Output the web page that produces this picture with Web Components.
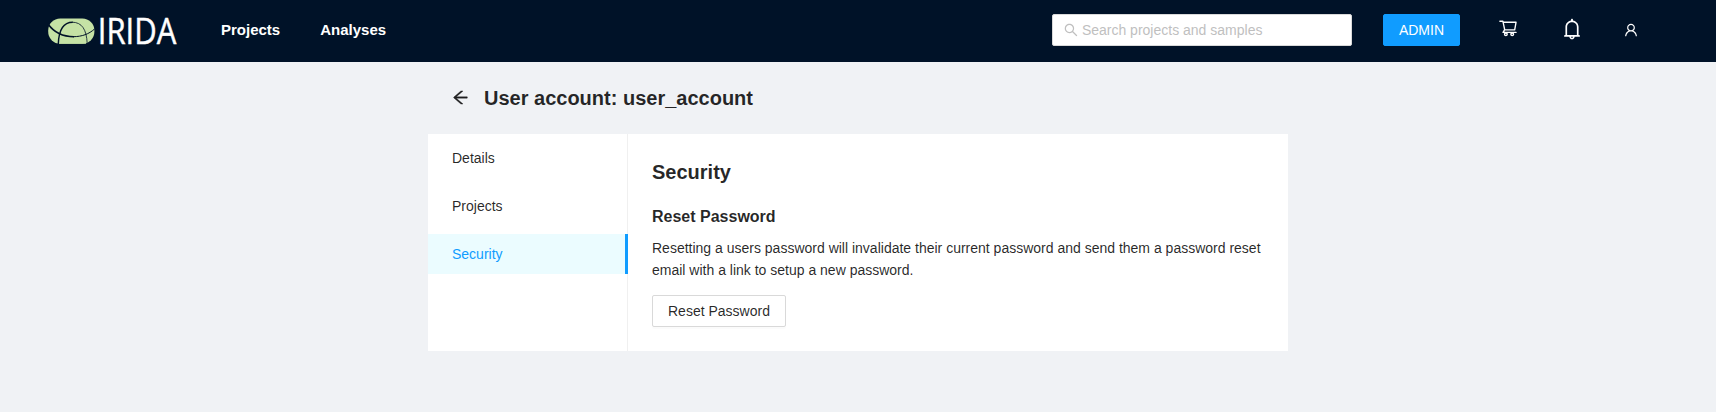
<!DOCTYPE html>
<html lang="en">
<head>
<meta charset="utf-8">
<title>IRIDA - User account</title>
<style>
body{margin:0;background:#f0f2f5;font:14px/22px "Liberation Sans",Arial,sans-serif;color:rgba(0,0,0,.85)}
</style>
</head>
<body>
<irida-app></irida-app>
<script>
const ICONS = {
  search:'M909.6 854.5L649.9 594.8C690.2 542.7 712 479 712 412c0-80.2-31.3-155.4-87.9-212.1-56.6-56.7-132-87.9-212.1-87.9s-155.5 31.3-212.1 87.9C143.2 256.5 112 331.8 112 412c0 80.1 31.3 155.5 87.9 212.1C256.5 680.8 331.8 712 412 712c67 0 130.6-21.8 182.7-62l259.7 259.6a8.2 8.2 0 0011.6 0l43.6-43.5a8.2 8.2 0 000-11.6zM570.4 570.4C528 612.7 471.8 636 412 636s-116-23.3-158.4-65.6C211.3 528 188 471.8 188 412s23.3-116.1 65.6-158.4C296 211.3 352.2 188 412 188s116.1 23.2 158.4 65.6S636 352.2 636 412s-23.3 116.1-65.6 158.4z',
  back:'M872 474H286.9l350.2-304c5.6-4.9 2.2-14-5.2-14h-88.5c-3.9 0-7.6 1.4-10.5 3.9L155 487.8a31.96 31.96 0 000 48.3L535.1 866c1.5 1.3 3.3 2 5.2 2h91.5c7.4 0 10.8-9.2 5.2-14L286.9 550H872c4.4 0 8-3.6 8-8v-60c0-4.4-3.6-8-8-8z',
  bell:'M816 768h-24V428c0-141.1-104.3-257.8-240-277.2V112c0-22.1-17.9-40-40-40s-40 17.9-40 40v38.8C336.3 170.2 232 286.9 232 428v340h-24c-17.7 0-32 14.3-32 32v32c0 4.4 3.6 8 8 8h216c0 61.8 50.2 112 112 112s112-50.2 112-112h216c4.4 0 8-3.6 8-8v-32c0-17.7-14.3-32-32-32zM512 888c-26.5 0-48-21.5-48-48h96c0 26.5-21.5 48-48 48zM304 768V428c0-55.6 21.6-107.8 60.9-147.1S456.4 220 512 220c55.6 0 107.8 21.6 147.1 60.9S720 372.4 720 428v340H304z',
  user:'M858.5 763.6a374 374 0 00-80.6-119.5 375.63 375.63 0 00-119.5-80.6c-.4-.2-.8-.3-1.2-.5C719.5 518 760 444.7 760 362c0-137-111-248-248-248S264 225 264 362c0 82.7 40.5 156 102.8 201.1-.4.2-.8.3-1.2.5-44.8 18.9-85 46-119.5 80.6a375.63 375.63 0 00-80.6 119.5A371.7 371.7 0 00136 901.8a8 8 0 008 8.2h60c4.4 0 7.9-3.5 8-7.8 2-77.2 33-149.5 87.8-204.3 56.7-56.7 132-87.9 212.2-87.9s155.5 31.2 212.2 87.9C779 752.7 810 825 812 902.2c.1 4.4 3.6 7.8 8 7.8h60a8 8 0 008-8.2c-1-47.8-10.9-94.3-29.5-138.2zM512 534c-45.9 0-89.1-17.9-121.6-50.4S340 407.9 340 362c0-45.9 17.9-89.1 50.4-121.6S466.1 190 512 190s89.1 17.9 121.6 50.4S684 316.1 684 362c0 45.9-17.9 89.1-50.4 121.6S557.9 534 512 534z',
  cart:'M922.9 701.9H327.4l29.9-60.9 496.8-.9c16.8 0 31.2-12 34.2-28.6l68.8-385.1c1.8-10.1-.9-20.5-7.5-28.4a34.99 34.99 0 00-26.6-12.5l-632-2.1-5.4-25.4c-3.4-16.2-18-28-34.6-28H96.5a35.3 35.3 0 100 70.6h125.9L246 312.8l58.1 281.3-74.8 122.1a34.96 34.96 0 00-3 36.8c6 11.9 18.1 19.4 31.5 19.4h62.8a102.43 102.43 0 00-20.6 61.7c0 56.6 46 102.6 102.6 102.6s102.6-46 102.6-102.6c0-22.3-7.4-44-20.6-61.7h161.1a102.43 102.43 0 00-20.6 61.7c0 56.6 46 102.6 102.6 102.6s102.6-46 102.6-102.6c0-22.3-7.4-44-20.6-61.7H923c19.4 0 35.3-15.8 35.3-35.3a35.42 35.42 0 00-35.4-35.2zM305.7 253l575.8 1.9-56.4 315.8-452.3.8L305.7 253zm96.9 612.7c-17.4 0-31.6-14.2-31.6-31.6 0-17.4 14.2-31.6 31.6-31.6s31.6 14.2 31.6 31.6a31.6 31.6 0 01-31.6 31.6zm325.1 0c-17.4 0-31.6-14.2-31.6-31.6 0-17.4 14.2-31.6 31.6-31.6s31.6 14.2 31.6 31.6a31.6 31.6 0 01-31.6 31.6z'
};

function define(name, html) {
  customElements.define(name, class extends HTMLElement {
    constructor() {
      super();
      const t = document.createElement('template');
      t.innerHTML = html;
      this.attachShadow({mode: 'open'}).append(t.content.cloneNode(true));
    }
  });
}

customElements.define('irida-icon', class extends HTMLElement {
  connectedCallback() {
    if (this.shadowRoot) return;
    const size = this.getAttribute('size') || 16;
    this.attachShadow({mode: 'open'}).innerHTML = `
      <style>:host{display:block;flex:none;line-height:0}svg{display:block;fill:currentColor}
      :host([bold]) path{stroke:currentColor;stroke-width:20}</style>
      <svg width="${size}" height="${size}" viewBox="0 0 1024 1024"><path d="${ICONS[this.getAttribute('name')]}"/></svg>`;
  }
});

define('irida-logo', `
  <style>:host{display:block;flex:none;width:134px;height:30px}svg{display:block;overflow:visible}
  text{font-family:"Open Sans","Noto Sans",sans-serif;font-size:35.6px;line-height:1;fill:#fff;stroke:#fff;stroke-width:.45px}</style>
  <svg width="134" height="30" viewBox="0 0 134 30">
    <rect x="0.2" y="3.6" width="46.2" height="25.1" rx="12" fill="#c5e2a5"/>
    <path d="M10.5 28.7V20H38V28.7Z" fill="#c5e2a5"/>
    <g fill="none" stroke="#001228">
      <path d="M0 9C5 16 14 21.7 26 21.7" stroke-width="1.6"/>
      <path d="M25 21.7C34 21.7 41 19 46.5 14" stroke-width="1"/>
      <path d="M10.3 29C10.8 14 15.5 7.2 24.7 7.2" stroke-width="1.4"/>
      <path d="M24 7.2C34 7.2 38.6 14.5 39.2 28.7" stroke-width=".8"/>
    </g>
    <text x="49.8" y="28.6" textLength="78.6" lengthAdjust="spacingAndGlyphs">IRIDA</text>
  </svg>`);

define('irida-search', `
  <style>:host{box-sizing:border-box;display:flex;align-items:center;gap:3px;width:300px;height:32px;
  padding:0 10px;border:1px solid #d9d9d9;border-radius:2px;background:#fff;color:#bfbfbf}</style>
  <irida-icon name="search" size="16"></irida-icon><span>Search projects and samples</span>`);

define('irida-button', `
  <style>
  :host{box-sizing:border-box;display:inline-flex;align-items:center;height:32px;padding:0 15px;
  border:1px solid #d9d9d9;border-radius:2px;background:#fff;box-shadow:0 2px 0 rgba(0,0,0,.016)}
  :host([primary]){background:#109cff;border-color:#109cff;color:#fff;box-shadow:none}
  </style><slot></slot>`);

define('irida-header', `
  <style>
  :host{box-sizing:border-box;display:flex;align-items:center;height:62px;padding:0 77px 2px 48px;background:#001228;color:#fff}
  nav{display:flex;gap:40px;margin-left:39px;font-size:15px;font-weight:700}
  .tools{display:flex;align-items:center;margin-left:auto}
  .admin{margin:0 38px 0 31px}
  .cart{margin-bottom:4px}
  .bell{margin:0 39px 2px 42px}
  </style>
  <irida-logo></irida-logo>
  <nav><span>Projects</span><span>Analyses</span></nav>
  <div class="tools">
    <irida-search></irida-search>
    <irida-button class="admin" primary>ADMIN</irida-button>
    <irida-icon class="cart" name="cart" size="20"></irida-icon>
    <irida-icon class="bell" name="bell" size="24"></irida-icon>
    <irida-icon name="user" size="16"></irida-icon>
  </div>`);

define('irida-menu-item', `
  <style>
  :host{box-sizing:border-box;display:block;height:40px;line-height:40px;padding-left:24px}
  :host([selected]){background:#ebfcff;color:#109cff;border-right:3px solid #109cff;margin-right:-1px}
  </style><slot></slot>`);

define('irida-menu', `
  <style>:host{box-sizing:border-box;display:flex;flex-direction:column;gap:8px;flex:none;width:200px;
  padding-top:4px;border-right:1px solid #f0f0f0}</style><slot></slot>`);

define('irida-page-title', `
  <style>:host{display:flex;align-items:center;height:32px;padding:20px 23px;gap:14px}
  h1{margin:0;font-size:20px;line-height:32px}irida-icon{margin-bottom:1px}</style>
  <irida-icon name="back" size="19" bold></irida-icon><h1><slot></slot></h1>`);

define('irida-security', `
  <style>:host{box-sizing:border-box;display:block;flex:1;padding:24px}
  h2{margin:0 0 19px;font-size:20px;line-height:28px}
  h3{margin:0 0 8px;font-size:16px;line-height:24px}
  p{margin:0 0 14px}irida-button{display:inline-flex;vertical-align:top}</style>
  <h2>Security</h2><h3>Reset Password</h3>
  <p>Resetting a users password will invalidate their current password and send them a password reset email with a link to setup a new password.</p>
  <irida-button>Reset Password</irida-button>`);

define('irida-app', `
  <style>:host{display:block}main{width:860px;margin:0 auto}.card{display:flex;height:217px;background:#fff}</style>
  <irida-header></irida-header>
  <main>
    <irida-page-title>User account: user_account</irida-page-title>
    <div class="card">
      <irida-menu>
        <irida-menu-item>Details</irida-menu-item>
        <irida-menu-item>Projects</irida-menu-item>
        <irida-menu-item selected>Security</irida-menu-item>
      </irida-menu>
      <irida-security></irida-security>
    </div>
  </main>`);
</script>
</body>
</html>
